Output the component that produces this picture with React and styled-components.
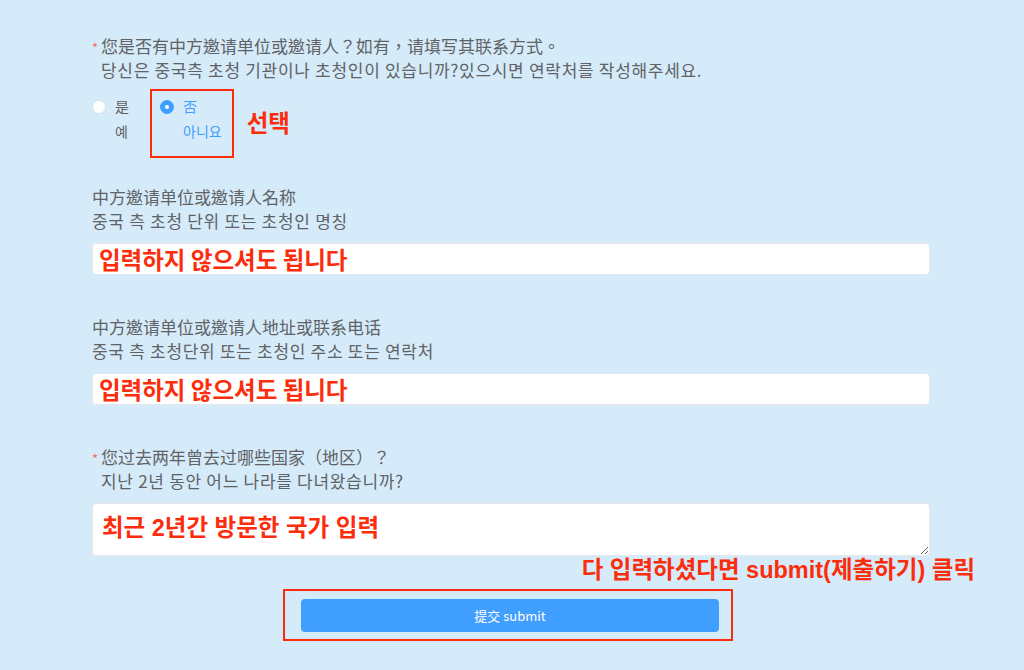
import React, { useState } from "react";
import styled, { createGlobalStyle } from "styled-components";

const GlobalStyle = createGlobalStyle`
  html, body {
    margin: 0;
    padding: 0;
    background: #d5ebf9;
  }
  body {
    font-family: "Noto Sans CJK TC", "Noto Sans CJK KR", sans-serif;
    color: #606266;
  }
  * {
    box-sizing: border-box;
  }
`;

const App = () => {
  const [invited, setInvited] = useState("no");

  return (
    <>
      <GlobalStyle />
      <Page>
        <Form onSubmit={(e) => e.preventDefault()}>
          <Field>
            <Label>
              <Star>*</Star>
              <LabelText>
                <Zh>您是否有中方邀请单位或邀请人？如有，请填写其联系方式。</Zh>
                <Ko>당신은 중국측 초청 기관이나 초청인이 있습니까?있으시면 연락처를 작성해주세요.</Ko>
              </LabelText>
            </Label>
            <RadioRow>
              <RadioOption onClick={() => setInvited("yes")}>
                <CircleCell>
                  <Circle $checked={invited === "yes"} />
                </CircleCell>
                <RadioText $checked={invited === "yes"}>
                  <span>是</span>
                  <span>예</span>
                </RadioText>
              </RadioOption>
              <RadioOption $marked onClick={() => setInvited("no")}>
                <CircleCell>
                  <Circle $checked={invited === "no"} />
                </CircleCell>
                <RadioText $checked={invited === "no"}>
                  <span>否</span>
                  <span>아니요</span>
                </RadioText>
              </RadioOption>
              <Note>선택</Note>
            </RadioRow>
          </Field>

          <Field $top={27}>
            <Label>
              <LabelText>
                <Zh>中方邀请单位或邀请人名称</Zh>
                <Ko>중국 측 초청 단위 또는 초청인 명칭</Ko>
              </LabelText>
            </Label>
            <TextInput readOnly value="입력하지 않으셔도 됩니다" />
          </Field>

          <Field>
            <Label>
              <LabelText>
                <Zh>中方邀请单位或邀请人地址或联系电话</Zh>
                <Ko>중국 측 초청단위 또는 초청인 주소 또는 연락처</Ko>
              </LabelText>
            </Label>
            <TextInput readOnly value="입력하지 않으셔도 됩니다" />
          </Field>

          <Field>
            <Label>
              <Star>*</Star>
              <LabelText>
                <Zh>您过去两年曾去过哪些国家（地区）？</Zh>
                <Ko>지난 2년 동안 어느 나라를 다녀왔습니까?</Ko>
              </LabelText>
            </Label>
            <TextArea readOnly value="최근 2년간 방문한 국가 입력" />
          </Field>

          <HintRow>
            <Note>다 입력하셨다면 submit(제출하기) 클릭</Note>
          </HintRow>

          <SubmitFrame>
            <SubmitButton type="submit">提交 submit</SubmitButton>
          </SubmitFrame>
        </Form>
      </Page>
    </>
  );
};

const Page = styled.div`
  min-height: 670px;
  padding: 34px 0 0 92px;
`;

const Form = styled.form`
  width: 838px;
  display: flex;
  flex-direction: column;
`;

const Field = styled.div`
  display: flex;
  flex-direction: column;
  gap: 10px;
  margin-top: ${(p) => (p.$top !== undefined ? p.$top : 40)}px;

  &:first-child {
    margin-top: 0;
    gap: 7px;
  }
`;

const Label = styled.div`
  display: flex;
  line-height: 24px;
  color: #606266;
`;

const Star = styled.span`
  width: 9px;
  color: #f56c6c;
  font-size: 13px;
  line-height: 24px;
  padding-top: 2px;
`;

const LabelText = styled.div`
  display: flex;
  flex-direction: column;
`;

const Zh = styled.span`
  font-family: "Noto Sans CJK TC", sans-serif;
  font-size: 17px;
`;

const Ko = styled.span`
  font-family: "Noto Sans CJK KR", sans-serif;
  font-size: 17px;
  letter-spacing: 0.7px;
`;

const RadioRow = styled.div`
  display: flex;
  align-items: flex-start;
`;

const RadioOption = styled.label`
  display: flex;
  align-items: flex-start;
  cursor: pointer;
  margin-right: ${(p) => (p.$marked ? 13 : 21)}px;
  border: ${(p) => (p.$marked ? "2px solid #fb2d0c" : "none")};
  padding: ${(p) => (p.$marked ? "3px 10px 12px 8px" : "5px 0 0 0")};
`;

const CircleCell = styled.div`
  height: 25px;
  display: flex;
  align-items: center;
`;

const Circle = styled.span`
  width: 14px;
  height: 14px;
  border-radius: 50%;
  border: 1px solid ${(p) => (p.$checked ? "#409eff" : "#dcdfe6")};
  background: ${(p) => (p.$checked ? "#409eff" : "#fff")};
  display: flex;
  align-items: center;
  justify-content: center;

  &::after {
    content: "";
    width: 4px;
    height: 4px;
    border-radius: 50%;
    background: #fff;
    display: ${(p) => (p.$checked ? "block" : "none")};
  }
`;

const RadioText = styled.div`
  display: flex;
  flex-direction: column;
  padding-left: 9px;
  font-family: "Noto Sans CJK KR", sans-serif;
  font-size: 14px;
  line-height: 25px;
  color: ${(p) => (p.$checked ? "#409eff" : "#606266")};
`;

const Note = styled.span`
  align-self: center;
  font-family: "Liberation Sans", "Noto Sans CJK KR", sans-serif;
  font-weight: 700;
  font-size: 23.5px;
  line-height: 24px;
  color: #fb2d0c;
  white-space: nowrap;
`;

const TextInput = styled.input`
  width: 100%;
  height: 32px;
  padding: 0 6px;
  background: #fff;
  border: 1px solid #e4e7ed;
  border-radius: 4px;
  outline: none;
  font-family: "Noto Sans CJK KR", sans-serif;
  font-weight: 700;
  font-size: 23.5px;
  color: #fb2d0c;
`;

const TextArea = styled.textarea`
  width: 100%;
  height: 53px;
  padding: 9px 9px;
  background: #fff;
  border: 1px solid #e4e7ed;
  border-radius: 4px;
  outline: none;
  resize: vertical;
  font-family: "Liberation Sans", "Noto Sans CJK KR", sans-serif;
  font-weight: 700;
  font-size: 23.5px;
  line-height: 30px;
  color: #fb2d0c;
`;

const HintRow = styled.div`
  display: flex;
  justify-content: flex-end;
  margin: 2px -45px 0 0;
`;

const SubmitFrame = styled.div`
  align-self: center;
  width: 450px;
  margin: 7px 0 0 -6px;
  padding: 8px 12px 7px 16px;
  border: 2px solid #fb2d0c;
`;

const SubmitButton = styled.button`
  width: 100%;
  height: 33px;
  border: none;
  border-radius: 4px;
  background: #409eff;
  color: #fff;
  font-family: "Noto Sans CJK SC", "Liberation Sans", sans-serif;
  font-size: 13px;
  cursor: pointer;
`;

export default App;
